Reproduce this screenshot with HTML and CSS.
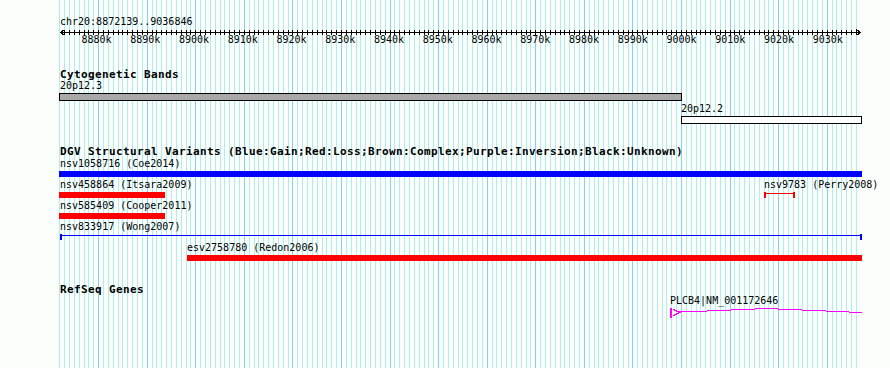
FILE: index.html
```html
<!DOCTYPE html>
<html lang="en">
<head>
<meta charset="utf-8">
<title>chr20:8872139..9036846</title>
<link rel="stylesheet" href="styles.css">
</head>
<body>
<div class="view">
  <svg class="grid" width="890" height="368" data-start="8872139" data-end="9036846"></svg>
  <div class="content">
    <section class="ruler">
      <div class="ruler-title">chr20:8872139..9036846</div>
      <svg class="ticks" width="890" height="8">
        <line class="axis" x1="60" x2="861" y1="5.5" y2="5.5"/>
        <polyline class="arrow" points="64.5,2.5 60.5,5.5 64.5,8.5"/>
        <polyline class="arrow" points="856.5,2.5 860.5,5.5 856.5,8.5"/>
      </svg>
      <div class="ruler-labels">
        <span>8880k</span><span>8890k</span><span>8900k</span><span>8910k</span>
        <span>8920k</span><span>8930k</span><span>8940k</span><span>8950k</span>
        <span>8960k</span><span>8970k</span><span>8980k</span><span>8990k</span>
        <span>9000k</span><span>9010k</span><span>9020k</span><span>9030k</span>
      </div>
    </section>

    <section class="track track-cyto">
      <h2 class="track-title">Cytogenetic Bands</h2>
      <div class="lane lane-label"><span class="flabel" style="left:60px">20p12.3</span></div>
      <div class="lane lane-band"><div class="feature band band-gray" style="left:59px;width:623px"></div></div>
      <div class="lane lane-label lane-gap"><span class="flabel" style="left:681px">20p12.2</span></div>
      <div class="lane lane-band"><div class="feature band band-white" style="left:681px;width:181px"></div></div>
    </section>

    <section class="track track-dgv">
      <h2 class="track-title">DGV Structural Variants (Blue:Gain;Red:Loss;Brown:Complex;Purple:Inversion;Black:Unknown)</h2>
      <div class="sv-row">
        <div class="lane lane-label"><span class="flabel" style="left:60px">nsv1058716 (Coe2014)</span></div>
        <div class="lane lane-bar"><div class="feature bar gain" style="left:59px;width:803px"></div></div>
      </div>
      <div class="sv-row">
        <div class="lane lane-label">
          <span class="flabel" style="left:60px">nsv458864 (Itsara2009)</span>
          <span class="flabel" style="left:764px">nsv9783 (Perry2008)</span>
        </div>
        <div class="lane lane-bar">
          <div class="feature bar loss" style="left:59px;width:106px"></div>
          <div class="feature span loss" style="left:764px;width:31px"></div>
        </div>
      </div>
      <div class="sv-row">
        <div class="lane lane-label"><span class="flabel" style="left:60px">nsv585409 (Cooper2011)</span></div>
        <div class="lane lane-bar"><div class="feature bar loss" style="left:59px;width:106px"></div></div>
      </div>
      <div class="sv-row">
        <div class="lane lane-label"><span class="flabel" style="left:60px">nsv833917 (Wong2007)</span></div>
        <div class="lane lane-bar"><div class="feature span gain" style="left:60px;width:802px"></div></div>
      </div>
      <div class="sv-row">
        <div class="lane lane-label"><span class="flabel" style="left:187px">esv2758780 (Redon2006)</span></div>
        <div class="lane lane-bar"><div class="feature bar loss" style="left:187px;width:675px"></div></div>
      </div>
    </section>

    <section class="track track-genes">
      <h2 class="track-title">RefSeq Genes</h2>
      <div class="lane lane-label"><span class="flabel" style="left:670px">PLCB4|NM_001172646</span></div>
      <svg class="gene" width="890" height="12">
        <rect x="670" y="1" width="2" height="10"/>
        <polyline class="gene-line" points="673.5,2.5 679.5,5.5 673.5,8.5"/>
        <path class="gene-line" d="M679 4.5 H707 M707 3.5 H731 M731 2.5 H755 M755 1.5 H778 M778 2.5 H802 M802 3.5 H826 M826 4.5 H849 M849 5.5 H862"/>
      </svg>
    </section>
  </div>
</div>
<script src="script.js"></script>
</body>
</html>
```

FILE: styles.css
```css
* {
  box-sizing: border-box;
  margin: 0;
  padding: 0;
}

body {
  margin: 0;
  background: #fbfefb;
  color: #000;
  font-family: "DejaVu Sans Mono", "Liberation Mono", monospace;
  font-size: 10px;
  line-height: 10px;
}

.view {
  position: relative;
  width: 890px;
  height: 368px;
  overflow: hidden;
}

.grid {
  position: absolute;
  left: 0;
  top: 0;
}

.grid line {
  stroke-width: 1;
  shape-rendering: crispEdges;
}

.grid .minor {
  stroke: #afeeee;
}

.grid .major {
  stroke: #87cefa;
}

.content {
  position: relative;
  padding-top: 17px;
}

/* ruler */
.ruler-title {
  height: 10px;
  padding-left: 60px;
  white-space: nowrap;
}

.ticks {
  display: block;
}

.ticks line,
.ticks polyline {
  stroke: #000;
  stroke-width: 1;
  fill: none;
  shape-rendering: crispEdges;
}

.ruler-labels {
  display: flex;
  gap: 18.65px;
  height: 10px;
  padding-left: 81.5px;
}

.ruler-labels span {
  flex: 0 0 30px;
  text-align: center;
}

/* tracks */
.track-title {
  height: 11px;
  font-size: 11px;
  line-height: 11px;
  font-weight: bold;
  letter-spacing: 0.378px;
  padding-left: 60px;
  white-space: nowrap;
}

.track-cyto {
  margin-top: 24px;
}

.track-dgv {
  margin-top: 22px;
}

.track-genes {
  margin-top: 20px;
}

.lane {
  position: relative;
}

.lane-label {
  height: 10px;
  margin-top: 1px;
}

.track-dgv .sv-row:first-of-type {
  margin-top: 2px;
}

.lane-band {
  height: 8px;
  margin-top: 2px;
}

.lane-gap {
  margin-top: 3px;
}

.feature {
  position: absolute;
  top: 0;
  height: 100%;
}

.flabel {
  position: absolute;
  top: 0;
  white-space: nowrap;
}

.band {
  border: 1px solid #000;
}

.band-gray {
  background: #a9a9a9;
}

.band-white {
  background: #fff;
}

.sv-row {
  height: 21px;
}

.sv-row .lane-label {
  margin-top: 0;
}

.lane-bar {
  height: 6px;
  margin-top: 2px;
}

.bar.gain {
  background: #0000ff;
}

.bar.loss {
  background: #ff0000;
}

/* thin span with end caps */
.span {
  border-left: 2px solid;
  border-right: 2px solid;
  background: linear-gradient(currentColor, currentColor) 0 1px / 100% 1px no-repeat;
}

.span.gain {
  color: #0000ff;
}

.span.loss {
  color: #ff0000;
}

.gene {
  display: block;
  margin-top: 1px;
}

.gene rect {
  fill: #ff00ff;
}

.gene-line {
  stroke: #ff00ff;
  stroke-width: 1;
  fill: none;
  shape-rendering: crispEdges;
}
```

FILE: script.js
```js
(function () {
  var NS = 'http://www.w3.org/2000/svg';
  var grid = document.querySelector('.grid');
  var ticks = document.querySelector('.ticks');
  var start = +grid.getAttribute('data-start');
  var end = +grid.getAttribute('data-end');
  var left = 60, width = 800;
  var scale = width / (end - start);

  function xOf(bp) {
    return Math.round(left + (bp - start) * scale);
  }

  function line(parent, cls, x, y1, y2) {
    var l = document.createElementNS(NS, 'line');
    l.setAttribute('x1', x);
    l.setAttribute('x2', x);
    l.setAttribute('y1', y1);
    l.setAttribute('y2', y2);
    if (cls) l.setAttribute('class', cls);
    parent.appendChild(l);
  }

  for (var k = Math.floor(start / 1000); k * 1000 <= end; k++) {
    var x = xOf(k * 1000) + 0.5;
    line(grid, k % 10 === 0 ? 'major' : 'minor', x, 0, 368);
    if (k * 1000 >= start) line(ticks, null, x, 3, 8);
  }
})();
```
